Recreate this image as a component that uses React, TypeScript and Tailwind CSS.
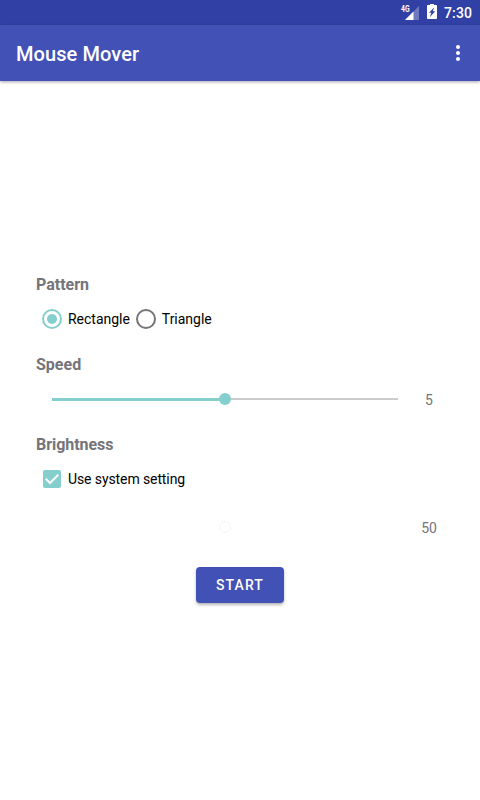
import React from "react";

function StatusBar() {
  return (
    <div className="flex h-[25px] items-center justify-end bg-[#3140a5] pr-2 text-white">
      <svg width="20" height="16" viewBox="0 0 20 16" className="mt-px mr-[7px]">
        <path d="M19 1v14H5z" fill="#fff" fillOpacity="0.3" />
        <path d="M13.500 6.500v8.500H5z" fill="#fff" />
        <text
          x="1"
          y="7"
          fontSize="8.500"
          fontWeight="700"
          fill="#fff"
          fontFamily="Roboto, sans-serif"
          textLength="8.500"
          lengthAdjust="spacingAndGlyphs"
        >
          4G
        </text>
      </svg>
      <svg width="10" height="16" viewBox="0 0 10 16" className="mr-[7px] mb-px">
        <path
          fill="#fff"
          fillRule="evenodd"
          d="M3 0h4v1h2.300q0.700 0 0.700 0.700v12.600q0 0.700-0.700 0.700H0.700q-0.700 0-0.700-0.700V1.700q0-0.700 0.700-0.700H3zM7.300 3.200L2 8.800h2.400L2.800 13.300L8.200 7.300H5.700z"
        />
      </svg>
      <span className="text-sm font-medium tracking-[0.1px]">7:30</span>
    </div>
  );
}

function AppBar() {
  return (
    <header className="flex h-14 items-center justify-between bg-[#4251b5] pl-4 pr-5 text-white shadow-[0_1px_3px_rgba(0,0,0,0.35)]">
      <h1 className="pt-0.5 text-xl font-medium tracking-[0.08px]">
        Mouse Mover
      </h1>
      <button aria-label="More options" className="flex flex-col gap-0.5">
        <span className="size-1 rounded-full bg-white" />
        <span className="size-1 rounded-full bg-white" />
        <span className="size-1 rounded-full bg-white" />
      </button>
    </header>
  );
}

function Heading({ children }: { children: React.ReactNode }) {
  return (
    <h2 className="h-5 pl-4 text-base leading-5 font-bold text-[#757479]">
      {children}
    </h2>
  );
}

function Radio({ label, checked }: { label: string; checked?: boolean }) {
  return (
    <label className="flex items-center">
      <span
        className={`flex size-5 items-center justify-center rounded-full border-2 ${
          checked ? "border-[#84cfcd]" : "border-[#757479]"
        }`}
      >
        {checked && <span className="size-2.5 rounded-full bg-[#84cfcd]" />}
      </span>
      <span className="ml-1.5 tracking-[-0.02px]">{label}</span>
    </label>
  );
}

export default function App() {
  return (
    <div className="flex h-[800px] w-[480px] flex-col overflow-hidden bg-white font-['Roboto',sans-serif]">
      <StatusBar />
      <AppBar />
      <main className="flex flex-col px-5 pt-[194px] text-sm text-black">
        <Heading>Pattern</Heading>
        <div className="mt-2 flex h-8 items-center gap-1.5 pl-[22px]">
          <Radio label="Rectangle" checked />
          <Radio label="Triangle" />
        </div>

        <div className="mt-5">
          <Heading>Speed</Heading>
        </div>
        <div className="mt-2 flex h-8 items-center pl-8">
          <div className="flex w-[346px] shrink-0 items-center">
            <span className="h-[3px] flex-1 bg-[#84cfcd]" />
            <span className="z-10 -mx-1.5 size-3 rounded-full bg-[#84cfcd]" />
            <span className="h-0.5 flex-1 bg-[#cccccc]" />
          </div>
          <span className="w-[62px] pt-0.5 text-center text-[#757479]">5</span>
        </div>

        <div className="mt-5 tracking-[-0.05px]">
          <Heading>Brightness</Heading>
        </div>
        <label className="mt-2 flex h-8 items-center pl-[23px]">
          <span className="flex size-[18px] items-center justify-center rounded-xs bg-[#84cfcd]">
            <svg width="18" height="18" viewBox="0 0 18 18" fill="none">
              <path d="M2.700 8.700L7 13L15.300 4.700" stroke="#fff" strokeWidth="2" />
            </svg>
          </span>
          <span className="ml-[7px] tracking-[-0.1px]">Use system setting</span>
        </label>
        <div className="mt-4 flex h-8 items-center pl-8">
          <div className="flex w-[346px] shrink-0 items-center justify-center">
            <span className="size-3 rounded-full border border-[#f5f5fc]" />
          </div>
          <span className="w-[62px] pt-0.5 text-center text-[#757479]">50</span>
        </div>

        <button className="mt-6 h-9 w-[88px] self-center rounded bg-[#4251b5] text-sm font-medium tracking-[1.1px] text-white shadow-[0_2px_3px_rgba(0,0,0,0.28)]">
          START
        </button>
      </main>
    </div>
  );
}
